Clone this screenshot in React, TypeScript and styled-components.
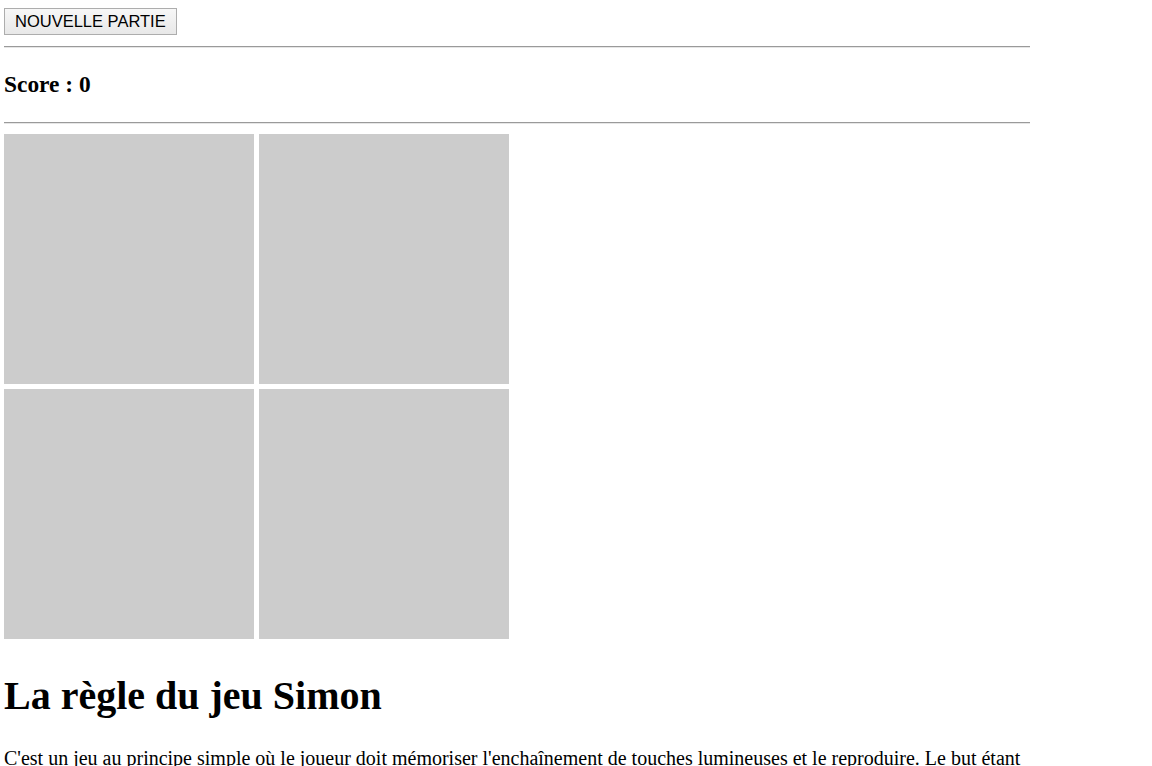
import React from "react";
import styled, { createGlobalStyle } from "styled-components";

const GlobalStyle = createGlobalStyle`
  html, body {
    margin: 0;
    padding: 0;
    background: #ffffff;
    color: #000000;
    font-family: "Liberation Serif", "Times New Roman", serif;
    font-size: 20px;
  }
`;

const Page = styled.div`
  padding: 8px 0 0 4px;
  width: 1026px;
`;

const Toolbar = styled.div`
  display: flex;
  height: 27px;
`;

const NewGameButton = styled.button`
  font-family: "Liberation Sans", Arial, sans-serif;
  font-size: 16.5px;
  color: #000;
  height: 27px;
  padding: 0 10px 0 10px;
  border: 1px solid #adadad;
  border-radius: 0;
  background: linear-gradient(#f7f7f7, #e8e8e8);
  cursor: pointer;
  line-height: 1;
`;

const Rule = styled.hr<{ $top: number; $bottom: number }>`
  height: 0;
  margin: ${(p) => p.$top}px 0 ${(p) => p.$bottom}px 0;
  border: 0;
  border-top: 1px solid #9a9a9a;
  border-bottom: 1px solid #e6e6e6;
`;

const Score = styled.h3`
  font-size: 23.4px;
  font-weight: bold;
  margin: 0;
  line-height: 27px;
`;

const Board = styled.div`
  display: grid;
  grid-template-columns: repeat(2, 250px);
  grid-auto-rows: 250px;
  gap: 5px;
`;

const Pad = styled.div<{ $color: string }>`
  background: ${(p) => p.$color};
`;

const Title = styled.h1`
  font-size: 40px;
  font-weight: bold;
  line-height: 46px;
  margin: 34px 0 28px 0;
`;

const Paragraph = styled.p`
  font-size: 20px;
  line-height: 23px;
  margin: 0;
`;

export default function App() {
  const pads = ["#cccccc", "#cccccc", "#cccccc", "#cccccc"];
  return (
    <>
      <GlobalStyle />
      <Page>
        <Toolbar>
          <NewGameButton>NOUVELLE PARTIE</NewGameButton>
        </Toolbar>
        <Rule $top={11} $bottom={23} />
        <Score>Score : 0</Score>
        <Rule $top={24} $bottom={10} />
        <Board>
          {pads.map((c, i) => (
            <Pad key={i} $color={c} />
          ))}
        </Board>
        <Title>La règle du jeu Simon</Title>
        <Paragraph>
          C'est un jeu au principe simple où le joueur doit mémoriser l'enchaînement de touches
          lumineuses et le reproduire. Le but étant d'aller le plus loin possible dans la
          séquence sans se tromper.
        </Paragraph>
      </Page>
    </>
  );
}
